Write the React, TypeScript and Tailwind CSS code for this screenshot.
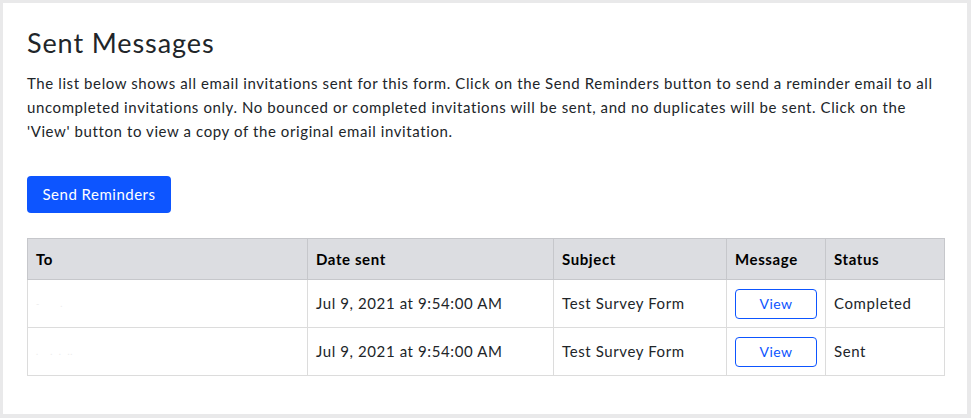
export default function App() {
  const rows = [
    { to: "-       .", date: "Jul 9, 2021 at 9:54:00 AM", subject: "Test Survey Form", status: "Completed" },
    { to: ".    .  .  ..", date: "Jul 9, 2021 at 9:54:00 AM", subject: "Test Survey Form", status: "Sent" },
  ];

  return (
    <div className="w-[971px] h-[418px] bg-[#e9e9ea] pt-[3px] pl-[3px] pr-[4px] pb-[4px] font-['Lato','Noto_Sans',sans-serif] text-[#212529]">
      <div className="h-full bg-white pl-[24px] pr-[23px] pt-[22px]">
        <h1 className="text-[27px] leading-[36px] font-normal tracking-[0.9px]">Sent Messages</h1>
        <p className="mt-[10px] text-[15px] leading-[24px] tracking-[0.6px]">
          The list below shows all email invitations sent for this form. Click on the Send Reminders button to send a reminder email to all
          uncompleted invitations only. No bounced or completed invitations will be sent, and no duplicates will be sent. Click on the
          'View' button to view a copy of the original email invitation.
        </p>
        <button className="mt-[33px] h-[37px] w-[144px] rounded-[4px] bg-[#0d55ff] text-white text-[15px] tracking-[0.5px]">
          Send Reminders
        </button>
        <table className="mt-[25px] w-[917px] border-collapse text-[15px] tracking-[0.6px] table-fixed">
          <colgroup>
            <col className="w-[280px]" />
            <col className="w-[246px]" />
            <col className="w-[173px]" />
            <col className="w-[99px]" />
            <col className="w-[119px]" />
          </colgroup>
          <thead>
            <tr className="h-[41px] bg-[#dcdde1] text-left">
              {["To", "Date sent", "Subject", "Message", "Status"].map((h) => (
                <th key={h} className="border border-[#c6c7cb] px-[8px] font-bold text-black">
                  {h}
                </th>
              ))}
            </tr>
          </thead>
          <tbody>
            {rows.map((r, i) => (
              <tr key={i} className="h-[48px]">
                <td className="border border-[#dcdcdc] px-[8px] text-[9px] text-[#ececec] whitespace-pre">{r.to}</td>
                <td className="border border-[#dcdcdc] px-[8px]">{r.date}</td>
                <td className="border border-[#dcdcdc] px-[8px]">{r.subject}</td>
                <td className="border border-[#dcdcdc] px-[8px]">
                  <button className="h-[30px] w-[82px] rounded-[4px] border border-[#0d55ff] text-[#0d55ff] text-[14px] tracking-[0.5px]">
                    View
                  </button>
                </td>
                <td className="border border-[#dcdcdc] px-[8px]">{r.status}</td>
              </tr>
            ))}
          </tbody>
        </table>
      </div>
    </div>
  );
}
